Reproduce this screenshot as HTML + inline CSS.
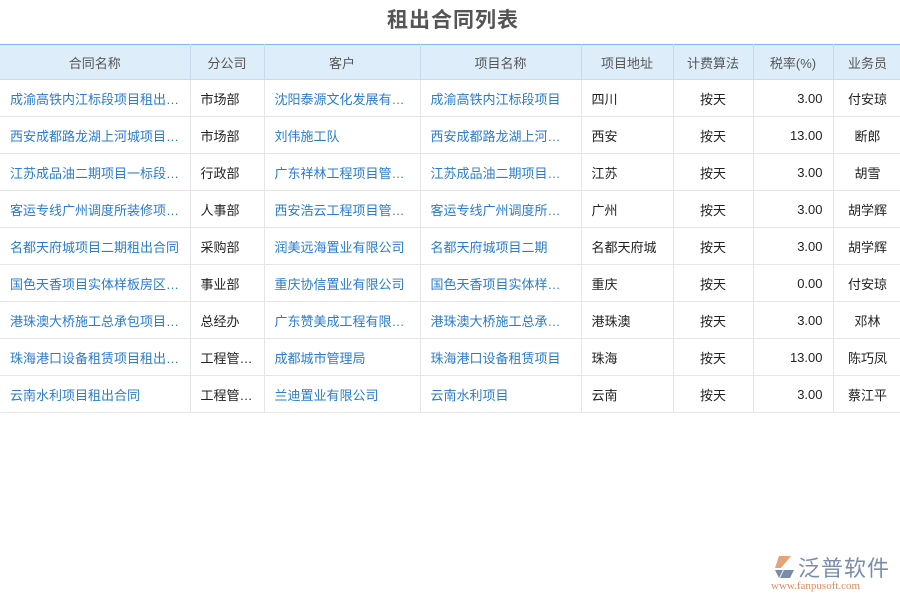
<!DOCTYPE html>
<html><head><meta charset="utf-8"><style>
body{margin:0;width:900px;height:600px;background:#fff;font-family:"Liberation Sans","Noto Sans CJK SC",sans-serif;position:relative;overflow:hidden}
h1{margin:0;position:absolute;top:4px;left:0;width:906px;text-align:center;font-size:21px;color:#555;font-weight:bold;letter-spacing:1px}
table{position:absolute;top:44px;left:0;border-collapse:collapse;table-layout:fixed;width:902px;font-size:13px}
th{background:#deedfa;color:#555;font-weight:normal;height:34px;border:1px solid #c8dbee;border-top:1px solid #7fb9e9;padding:0}
td{height:36px;border:1px solid #e3e6ea;padding:0 10px;white-space:nowrap;overflow:hidden;text-overflow:ellipsis;color:#222}
td.l{color:#2a7ccc}
td.c{text-align:center}td.r{text-align:right}
tr td:first-child,tr th:first-child{border-left:none}
</style></head><body>
<h1>租出合同列表</h1>
<table>
<colgroup><col style="width:190px"><col style="width:74px"><col style="width:156px"><col style="width:161px"><col style="width:92px"><col style="width:80px"><col style="width:80px"><col style="width:69px"></colgroup>
<tr><th>合同名称</th><th>分公司</th><th>客户</th><th>项目名称</th><th>项目地址</th><th>计费算法</th><th>税率(%)</th><th>业务员</th></tr>
<tr><td class="l">成渝高铁内江标段项目租出合同</td><td>市场部</td><td class="l">沈阳泰源文化发展有限公司</td><td class="l">成渝高铁内江标段项目</td><td>四川</td><td class="c">按天</td><td class="r">3.00</td><td class="c">付安琼</td></tr>
<tr><td class="l">西安成都路龙湖上河城项目租出</td><td>市场部</td><td class="l">刘伟施工队</td><td class="l">西安成都路龙湖上河城项目</td><td>西安</td><td class="c">按天</td><td class="r">13.00</td><td class="c">断郎</td></tr>
<tr><td class="l">江苏成品油二期项目一标段租出</td><td>行政部</td><td class="l">广东祥林工程项目管理有限</td><td class="l">江苏成品油二期项目一标段</td><td>江苏</td><td class="c">按天</td><td class="r">3.00</td><td class="c">胡雪</td></tr>
<tr><td class="l">客运专线广州调度所装修项目租</td><td>人事部</td><td class="l">西安浩云工程项目管理有限</td><td class="l">客运专线广州调度所装修项目</td><td>广州</td><td class="c">按天</td><td class="r">3.00</td><td class="c">胡学辉</td></tr>
<tr><td class="l">名都天府城项目二期租出合同</td><td>采购部</td><td class="l">润美远海置业有限公司</td><td class="l">名都天府城项目二期</td><td>名都天府城</td><td class="c">按天</td><td class="r">3.00</td><td class="c">胡学辉</td></tr>
<tr><td class="l">国色天香项目实体样板房区租出</td><td>事业部</td><td class="l">重庆协信置业有限公司</td><td class="l">国色天香项目实体样板房区</td><td>重庆</td><td class="c">按天</td><td class="r">0.00</td><td class="c">付安琼</td></tr>
<tr><td class="l">港珠澳大桥施工总承包项目租出</td><td>总经办</td><td class="l">广东赞美成工程有限公司</td><td class="l">港珠澳大桥施工总承包项目</td><td>港珠澳</td><td class="c">按天</td><td class="r">3.00</td><td class="c">邓林</td></tr>
<tr><td class="l">珠海港口设备租赁项目租出合同</td><td>工程管理部</td><td class="l">成都城市管理局</td><td class="l">珠海港口设备租赁项目</td><td>珠海</td><td class="c">按天</td><td class="r">13.00</td><td class="c">陈巧凤</td></tr>
<tr><td class="l">云南水利项目租出合同</td><td>工程管理部</td><td class="l">兰迪置业有限公司</td><td class="l">云南水利项目</td><td>云南</td><td class="c">按天</td><td class="r">3.00</td><td class="c">蔡江平</td></tr>
</table>
<svg style="position:absolute;left:771px;top:554px" width="26" height="26" viewBox="0 0 26 26"><path d="M8 2h12l-10 12h-6z" fill="#e8a27a"/><path d="M4 16h8l-4 8z M13 16h10l-4 8h-10z" fill="#7b8cab"/></svg>
<div style="position:absolute;left:798px;top:551px;font-size:22px;color:#7b8cab;letter-spacing:1px">泛普软件</div>
<div style="position:absolute;left:771px;top:580px;font-size:11px;color:#e08a60;font-family:'Liberation Serif',serif">www.fanpusoft.com</div>
</body></html>
